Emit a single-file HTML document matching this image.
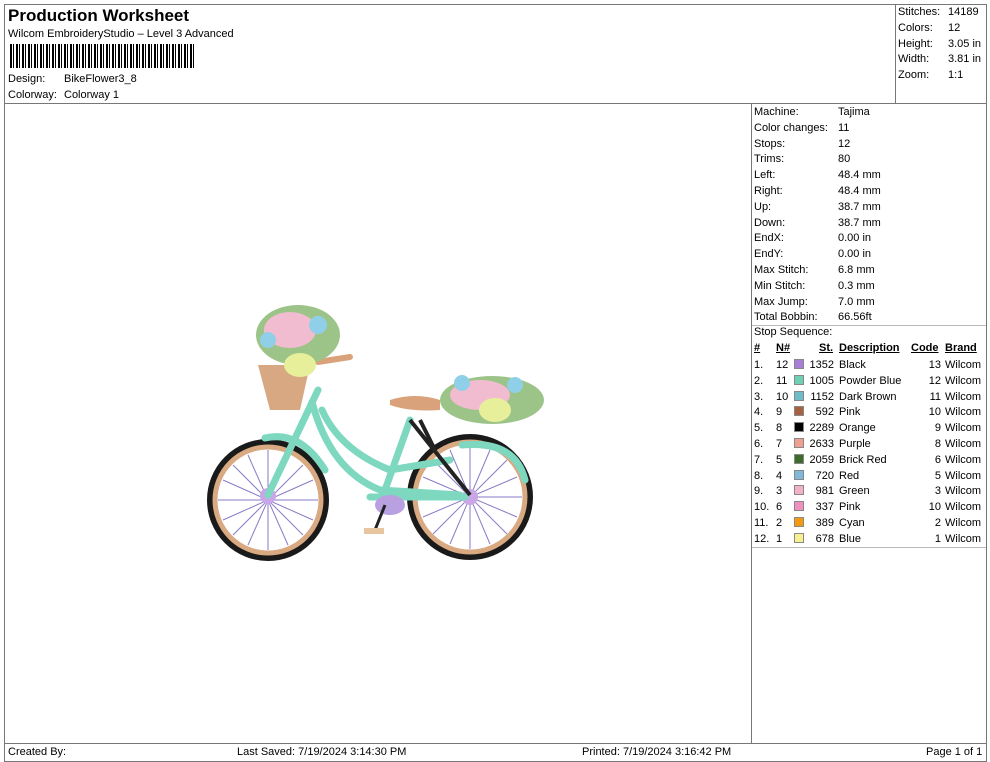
<!DOCTYPE html>
<html><head><style>
body{margin:0;width:990px;height:762px;background:#fff;font-family:"Liberation Sans",sans-serif;font-size:11px;color:#000;position:relative;overflow:hidden}
.a{position:absolute;white-space:nowrap}
.b{position:absolute;border:1px solid #777}
.sw{position:absolute;width:10px;height:10px;border:1px solid #888;box-sizing:border-box}
</style></head><body>
<div class="b" style="left:4px;top:4px;width:981px;height:756px"></div>
<div class="a" style="left:5px;top:103px;width:981px;border-top:1px solid #777"></div>
<div class="b" style="left:895px;top:4px;width:0;height:99px;border-width:0 0 0 1px"></div>
<div class="b" style="left:751px;top:103px;width:0;height:640px;border-width:0 0 0 1px"></div>
<div class="a" style="left:5px;top:743px;width:981px;border-top:1px solid #777"></div>
<div class="a" style="left:8px;top:6px;font-size:17px;font-weight:bold">Production Worksheet</div>
<div class="a" style="left:8px;top:28px">Wilcom EmbroideryStudio – Level 3 Advanced</div>
<div class="a" style="left:10px;top:44px;width:185px;height:24px;background:repeating-linear-gradient(90deg,#000 0 2px,#fff 2px 3px,#000 3px 4px,#fff 4px 6px)"></div>
<div class="a" style="left:8px;top:73px">Design:</div><div class="a" style="left:64px;top:73px">BikeFlower3_8</div>
<div class="a" style="left:8px;top:89px">Colorway:</div><div class="a" style="left:64px;top:89px">Colorway 1</div>
<div class="a" style="left:898px;top:5px;line-height:15.8px">Stitches:<br>Colors:<br>Height:<br>Width:<br>Zoom:</div>
<div class="a" style="left:948px;top:5px;line-height:15.8px">14189<br>12<br>3.05 in<br>3.81 in<br>1:1</div>
<div class="a" style="left:754px;top:105px;line-height:15.8px">Machine:<br>Color changes:<br>Stops:<br>Trims:<br>Left:<br>Right:<br>Up:<br>Down:<br>EndX:<br>EndY:<br>Max Stitch:<br>Min Stitch:<br>Max Jump:<br>Total Bobbin:</div>
<div class="a" style="left:838px;top:105px;line-height:15.8px">Tajima<br>11<br>12<br>80<br>48.4 mm<br>48.4 mm<br>38.7 mm<br>38.7 mm<br>0.00 in<br>0.00 in<br>6.8 mm<br>0.3 mm<br>7.0 mm<br>66.56ft</div>
<div class="a" style="left:752px;top:325px;width:234px;border-top:1px solid #bbb"></div>
<div class="a" style="left:754px;top:326px">Stop Sequence:</div>
<div class="a" style="left:754px;top:342px;font-weight:bold;text-decoration:underline">#</div>
<div class="a" style="left:776px;top:342px;font-weight:bold;text-decoration:underline">N#</div>
<div class="a" style="left:819px;top:342px;font-weight:bold;text-decoration:underline">St.</div>
<div class="a" style="left:839px;top:342px;font-weight:bold;text-decoration:underline">Description</div>
<div class="a" style="left:911px;top:342px;font-weight:bold;text-decoration:underline">Code</div>
<div class="a" style="left:945px;top:342px;font-weight:bold;text-decoration:underline">Brand</div>
<div class="a" style="left:754px;top:358px;line-height:15.8px">1.<br>2.<br>3.<br>4.<br>5.<br>6.<br>7.<br>8.<br>9.<br>10.<br>11.<br>12.</div>
<div class="a" style="left:776px;top:358px;line-height:15.8px">12<br>11<br>10<br>9<br>8<br>7<br>5<br>4<br>3<br>6<br>2<br>1</div>
<div class="a" style="left:805px;top:358px;width:29px;text-align:right;line-height:15.8px">1352<br>1005<br>1152<br>592<br>2289<br>2633<br>2059<br>720<br>981<br>337<br>389<br>678</div>
<div class="a" style="left:839px;top:358px;line-height:15.8px">Black<br>Powder Blue<br>Dark Brown<br>Pink<br>Orange<br>Purple<br>Brick Red<br>Red<br>Green<br>Pink<br>Cyan<br>Blue</div>
<div class="a" style="left:915px;top:358px;width:26px;text-align:right;line-height:15.8px">13<br>12<br>11<br>10<br>9<br>8<br>6<br>5<br>3<br>10<br>2<br>1</div>
<div class="a" style="left:945px;top:358px;line-height:15.8px">Wilcom<br>Wilcom<br>Wilcom<br>Wilcom<br>Wilcom<br>Wilcom<br>Wilcom<br>Wilcom<br>Wilcom<br>Wilcom<br>Wilcom<br>Wilcom</div>
<div class="sw" style="left:794px;top:359px;background:#a77fd8"></div>
<div class="sw" style="left:794px;top:375px;background:#6fd1b4"></div>
<div class="sw" style="left:794px;top:391px;background:#6cbdc8"></div>
<div class="sw" style="left:794px;top:406px;background:#a9603e"></div>
<div class="sw" style="left:794px;top:422px;background:#000"></div>
<div class="sw" style="left:794px;top:438px;background:#f0a090"></div>
<div class="sw" style="left:794px;top:454px;background:#3d6b2a"></div>
<div class="sw" style="left:794px;top:470px;background:#7fb8d8"></div>
<div class="sw" style="left:794px;top:485px;background:#f4b0c8"></div>
<div class="sw" style="left:794px;top:501px;background:#f090c0"></div>
<div class="sw" style="left:794px;top:517px;background:#f39a10"></div>
<div class="sw" style="left:794px;top:533px;background:#f8f090"></div>
<div class="a" style="left:752px;top:547px;width:234px;border-top:1px solid #bbb"></div>
<div class="a" style="left:8px;top:746px">Created By:</div>
<div class="a" style="left:237px;top:746px">Last Saved: 7/19/2024 3:14:30 PM</div>
<div class="a" style="left:582px;top:746px">Printed: 7/19/2024 3:16:42 PM</div>
<div class="a" style="left:926px;top:746px">Page 1 of 1</div>
<svg class="a" style="left:0;top:0" width="750" height="740">
<g fill="none">
<circle cx="268" cy="500" r="58" stroke="#1a1a1a" stroke-width="6"/>
<circle cx="268" cy="500" r="53" stroke="#d9a982" stroke-width="5"/>
<circle cx="470" cy="497" r="60" stroke="#1a1a1a" stroke-width="6"/>
<circle cx="470" cy="497" r="55" stroke="#d9a982" stroke-width="5"/>
<g stroke="#8a7ac8" stroke-width="1">
<path d="M268 450V550M218 500H318M233 465L303 535M303 465L233 535M248 455L288 545M288 455L248 545M223 480L313 520M313 480L223 520"/>
<path d="M470 445V549M418 497H522M433 460L507 534M507 460L433 534M450 450L490 544M490 450L450 544M423 477L517 517M517 477L423 517"/>
</g>
<circle cx="268" cy="496" r="8" fill="#c9a6e6"/><circle cx="470" cy="497" r="8" fill="#c9a6e6"/>
<g stroke="#7ed8c0" stroke-width="7" stroke-linecap="round">
<path d="M268 495L318 390M312 402Q330 470 380 490L460 495M322 410Q340 450 390 470L450 460M385 490L410 420M370 497L465 497M265 438Q300 430 325 470M462 445Q515 440 525 480"/>
</g>
<path d="M410 420L470 495M420 420L435 450" stroke="#222" stroke-width="4"/>
<path d="M390 400Q415 392 440 400L440 410Q410 412 390 405Z" fill="#d9a27a"/>
<ellipse cx="390" cy="505" rx="15" ry="10" fill="#b9a0e0"/>
<path d="M385 505L375 530" stroke="#222" stroke-width="3"/><rect x="364" y="528" width="20" height="6" fill="#e8c6a0"/>
<path d="M258 365L310 365L300 410L270 410Z" fill="#d7a881"/>
<path d="M318 362L350 357" stroke="#d9a27a" stroke-width="6" stroke-linecap="round"/>
<ellipse cx="298" cy="335" rx="42" ry="30" fill="#9cc488"/>
<ellipse cx="290" cy="330" rx="26" ry="18" fill="#f2bcd0"/>
<ellipse cx="300" cy="365" rx="16" ry="12" fill="#e7ef9a"/>
<circle cx="318" cy="325" r="9" fill="#8fd0e8"/><circle cx="268" cy="340" r="8" fill="#8fd0e8"/>
<ellipse cx="492" cy="400" rx="52" ry="24" fill="#9cc488"/>
<ellipse cx="480" cy="395" rx="30" ry="15" fill="#f2bcd0"/>
<ellipse cx="495" cy="410" rx="16" ry="12" fill="#e7ef9a"/>
<circle cx="462" cy="383" r="8" fill="#8fd0e8"/><circle cx="515" cy="385" r="8" fill="#8fd0e8"/>
</g></svg>
</body></html>
